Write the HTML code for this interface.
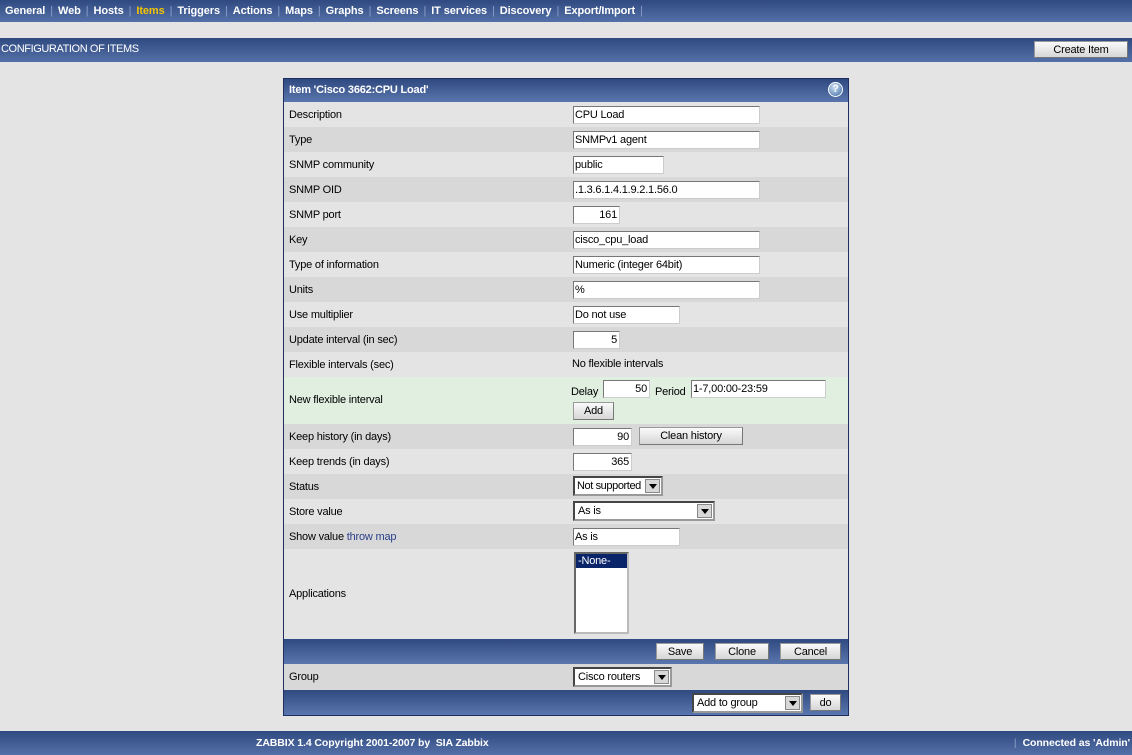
<!DOCTYPE html>
<html><head><meta charset="utf-8"><style>
*{margin:0;padding:0;box-sizing:border-box}
body{width:1132px;height:755px;background:#e4e4e4;font-family:"Liberation Sans",Arial,sans-serif;font-size:11px;letter-spacing:-0.2px;color:#000;position:relative;overflow:hidden}
.bar{position:absolute;left:0;width:1132px;background:linear-gradient(#2f4a80,#5470a8);color:#fff}
.nav{top:0;height:22px;font-weight:bold;font-size:11px;letter-spacing:-0.1px;line-height:22px;padding-left:5px}
.nav span.s{color:#8aa0c8;margin:0 5px;font-weight:normal}
.nav .a{color:#f5c400}
.hdr{top:38px;height:24px;line-height:23px;padding-left:1px;font-size:11px;letter-spacing:-0.4px}
.btn{position:absolute;background:linear-gradient(#fafafa,#d6d6d6);border:1px solid #999;border-right-color:#777;border-bottom-color:#777;font-size:11px;text-align:center;color:#000}
.tbl{position:absolute;left:283px;top:78px;width:566px;height:638px;border:1px solid #1e2e5e;background:#e4e4e4}
.row{position:absolute;left:0;width:564px;height:25px}
.row.d{background:#d8d8d8}
.row.l{background:#e4e4e4}
.lab{position:absolute;left:5px;line-height:26px}
.in{position:absolute;height:18px;background:#fff;border:1px solid #777;border-right-color:#ccc;border-bottom-color:#ccc;line-height:16px;padding-left:1px;font-size:11px;white-space:nowrap;overflow:hidden}
.r{text-align:right;padding-right:2px}
.sel{position:absolute;height:20px;background:#fff;border:2px inset #999;line-height:16px;padding-left:3px;white-space:nowrap;overflow:hidden}
.sel i{position:absolute;right:1px;top:1px;width:15px;height:14px;background:#d8d8d8;border:1px solid #888}
.sel i:after{content:"";position:absolute;left:3px;top:4px;border-left:4px solid transparent;border-right:4px solid transparent;border-top:5px solid #000}
.tb{position:absolute;left:0;width:564px;background:linear-gradient(#2f4a80,#5a76ae)}
</style></head><body>
<div class="bar nav">General<span class="s">|</span>Web<span class="s">|</span>Hosts<span class="s">|</span><span class="a">Items</span><span class="s">|</span>Triggers<span class="s">|</span>Actions<span class="s">|</span>Maps<span class="s">|</span>Graphs<span class="s">|</span>Screens<span class="s">|</span>IT services<span class="s">|</span>Discovery<span class="s">|</span>Export/Import<span class="s">|</span></div>
<div class="bar hdr">CONFIGURATION OF ITEMS</div>
<div class="btn" style="left:1034px;top:41px;width:94px;height:17px;line-height:16px">Create Item</div>

<div class="tbl">
<div class="tb" style="top:0;height:23px;color:#fff;font-weight:bold;line-height:22px;padding-left:5px">Item 'Cisco 3662:CPU Load'
<div style="position:absolute;right:5px;top:3px;width:15px;height:15px;border-radius:50%;background:radial-gradient(circle at 40% 35%,#cde,#3a6aa8);color:#fff;font-size:11px;line-height:13px;text-align:center;border:1px solid #fff">?</div></div>

<div class="row l" style="top:23px"><div class="lab">Description</div><div class="in" style="left:289px;top:4px;width:187px">CPU Load</div></div>
<div class="row d" style="top:48px"><div class="lab">Type</div><div class="in" style="left:289px;top:4px;width:187px">SNMPv1 agent</div></div>
<div class="row l" style="top:73px"><div class="lab">SNMP community</div><div class="in" style="left:289px;top:4px;width:91px">public</div></div>
<div class="row d" style="top:98px"><div class="lab">SNMP OID</div><div class="in" style="left:289px;top:4px;width:187px">.1.3.6.1.4.1.9.2.1.56.0</div></div>
<div class="row l" style="top:123px"><div class="lab">SNMP port</div><div class="in r" style="left:289px;top:4px;width:47px">161</div></div>
<div class="row d" style="top:148px"><div class="lab">Key</div><div class="in" style="left:289px;top:4px;width:187px">cisco_cpu_load</div></div>
<div class="row l" style="top:173px"><div class="lab">Type of information</div><div class="in" style="left:289px;top:4px;width:187px">Numeric (integer 64bit)</div></div>
<div class="row d" style="top:198px"><div class="lab">Units</div><div class="in" style="left:289px;top:4px;width:187px">%</div></div>
<div class="row l" style="top:223px"><div class="lab">Use multiplier</div><div class="in" style="left:289px;top:4px;width:107px">Do not use</div></div>
<div class="row d" style="top:248px"><div class="lab">Update interval (in sec)</div><div class="in r" style="left:289px;top:4px;width:47px">5</div></div>
<div class="row l" style="top:273px"><div class="lab">Flexible intervals (sec)</div><div style="position:absolute;left:288px;line-height:25px">No flexible intervals</div></div>
<div class="row" style="top:298px;height:47px;background:#e0efe0"><div class="lab" style="line-height:47px">New flexible interval</div>
<div style="position:absolute;left:287px;top:9px">Delay</div><div class="in r" style="left:319px;top:3px;width:47px">50</div>
<div style="position:absolute;left:371px;top:9px">Period</div><div class="in" style="left:407px;top:3px;width:135px">1-7,00:00-23:59</div>
<div class="btn" style="left:289px;top:25px;width:41px;height:18px;line-height:16px">Add</div></div>
<div class="row d" style="top:345px"><div class="lab">Keep history (in days)</div><div class="in r" style="left:289px;top:4px;width:59px">90</div><div class="btn" style="left:355px;top:3px;width:104px;height:18px;line-height:16px">Clean history</div></div>
<div class="row l" style="top:370px"><div class="lab">Keep trends (in days)</div><div class="in r" style="left:289px;top:4px;width:59px">365</div></div>
<div class="row d" style="top:395px"><div class="lab">Status</div><div class="sel" style="left:289px;top:2px;width:90px;padding-left:2px;letter-spacing:-0.4px">Not supported<i></i></div></div>
<div class="row l" style="top:420px"><div class="lab">Store value</div><div class="sel" style="left:289px;top:2px;width:142px">As is<i></i></div></div>
<div class="row d" style="top:445px"><div class="lab">Show value <span style="color:#2a3f8a">throw map</span></div><div class="in" style="left:289px;top:4px;width:107px">As is</div></div>
<div class="row l" style="top:470px;height:90px"><div class="lab" style="line-height:90px">Applications</div>
<div style="position:absolute;left:290px;top:3px;width:55px;height:82px;background:#fff;border:2px inset #bbb"><div style="background:#0a246a;color:#fff;padding-left:2px;line-height:14px">-None-</div></div></div>
<div class="tb" style="top:560px;height:25px">
<div class="btn" style="left:372px;top:4px;width:48px;height:17px;line-height:16px">Save</div>
<div class="btn" style="left:431px;top:4px;width:54px;height:17px;line-height:16px">Clone</div>
<div class="btn" style="left:496px;top:4px;width:61px;height:17px;line-height:16px">Cancel</div></div>
<div class="row d" style="top:585px;height:26px"><div class="lab">Group</div><div class="sel" style="left:289px;top:3px;width:99px">Cisco routers<i></i></div></div>
<div class="tb" style="top:611px;height:25px">
<div class="sel" style="left:408px;top:3px;width:111px">Add to group<i></i></div>
<div class="btn" style="left:526px;top:4px;width:31px;height:17px;line-height:16px">do</div></div>
</div>

<div class="bar" style="top:731px;height:24px;line-height:24px;font-weight:bold;font-size:10.5px;letter-spacing:-0.1px">
<span style="position:absolute;left:256px">ZABBIX 1.4 Copyright 2001-2007 by &nbsp;SIA Zabbix</span>
<span style="position:absolute;right:2px"><span style="color:#8aa0c8;font-weight:normal;margin-right:6px">|</span>Connected as 'Admin'</span></div>
</body></html>
